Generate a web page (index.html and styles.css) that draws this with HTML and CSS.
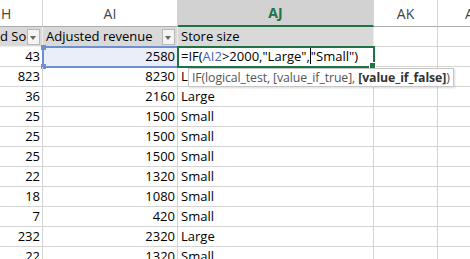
FILE: index.html
```html
<!DOCTYPE html>
<html lang="en">
<head>
    <meta charset="UTF-8">
    <title>Store size</title>
    <link rel="stylesheet" href="styles.css">
</head>
<body>
    <div class="sheet">
        <div class="col-head">H</div>
        <div class="col-head">AI</div>
        <div class="col-head active">AJ</div>
        <div class="col-head">AK</div>
        <div class="col-head">A</div>

        <div class="cell th">d So<span class="filter"></span></div>
        <div class="cell th">Adjusted revenue<span class="filter"></span></div>
        <div class="cell th">Store size</div>
        <div class="cell"></div>
        <div class="cell"></div>

        <div class="cell num">43</div>
        <div class="cell num ref">2580</div>
        <div class="cell editing">=IF(<span class="arg">AI2</span>&gt;2000,"Large",<span class="caret"></span>"Small")</div>
        <div class="cell"></div>
        <div class="cell"></div>

        <div class="cell num">823</div>
        <div class="cell num">8230</div>
        <div class="cell">Large
            <div class="tip">IF(logical_test, [value_if_true], <b>[value_if_false]</b>)</div>
        </div>
        <div class="cell"></div>
        <div class="cell"></div>
    </div>
    <script>
        const rows = [
            [36, 2160, 'Large'], [25, 1500, 'Small'], [25, 1500, 'Small'],
            [25, 1500, 'Small'], [22, 1320, 'Small'], [18, 1080, 'Small'],
            [7, 420, 'Small'], [232, 2320, 'Large'], [22, 1320, 'Small']
        ];
        const sheet = document.querySelector('.sheet');
        rows.forEach(r => {
            sheet.insertAdjacentHTML('beforeend',
                `<div class="cell num">${r[0]}</div>` +
                `<div class="cell num">${r[1]}</div>` +
                `<div class="cell">${r[2]}</div>` +
                `<div class="cell"></div><div class="cell"></div>`);
        });
    </script>
</body>
</html>
```

FILE: styles.css
```css
body {
    margin: 0;
    background: #ffffff;
    font-family: "Open Sans", sans-serif;
    font-size: 13px;
    color: #000;
    overflow: hidden;
}

.sheet {
    display: grid;
    grid-template-columns: 43px 135px 196px 64px 1fr;
    grid-template-rows: 27px;
    grid-auto-rows: 20px;
    width: 470px;
}

.col-head {
    background: #ffffff;
    color: #444;
    border-right: 1px solid #d4d4d4;
    border-bottom: 1px solid #ababab;
    display: flex;
    align-items: center;
    justify-content: center;
    font-size: 14px;
}

.col-head:first-child {
    justify-content: flex-start;
    padding-left: 1px;
}

.col-head:nth-child(5) {
    justify-content: flex-start;
    padding-left: 27px;
}

.col-head.active {
    background: #d2d2d2;
    color: #217346;
    font-weight: bold;
    border-bottom: 2px solid #217346;
}

.cell {
    position: relative;
    border-right: 1px solid #d4d4d4;
    border-bottom: 1px solid #d4d4d4;
    padding: 0 3px;
    line-height: 19px;
    white-space: nowrap;
}

.cell.num {
    text-align: right;
    padding-right: 2px;
}

.cell.th {
    background: #d9d9d9;
    border-right-color: #eeeeee;
    border-bottom-color: #eeeeee;
    overflow: hidden;
}

.sheet > .cell:nth-child(6) {
    text-indent: -3px;
}

.filter {
    position: absolute;
    right: 2px;
    top: 2px;
    width: 11px;
    height: 14px;
    background: #f4f4f4;
    border: 1px solid #b7b7b7;
}

.filter::after {
    content: "";
    position: absolute;
    left: 2px;
    top: 6px;
    border-left: 3.5px solid transparent;
    border-right: 3.5px solid transparent;
    border-top: 4px solid #666;
}

.cell.ref {
    background: #e9eef8;
    outline: 2px solid #6f8fcf;
    outline-offset: -1px;
}

.cell.ref::before,
.cell.ref::after {
    content: "";
    position: absolute;
    left: -2px;
    width: 5px;
    height: 5px;
    background: #6f8fcf;
}

.cell.ref::before {
    top: -2px;
}

.cell.ref::after {
    bottom: -3px;
}

.cell.editing {
    outline: 2px solid #217346;
    outline-offset: -1px;
    z-index: 1;
}

.cell.editing::after {
    content: "";
    position: absolute;
    right: -3px;
    bottom: -3px;
    width: 5px;
    height: 5px;
    background: #217346;
    border: 1px solid #fff;
}

.arg {
    color: #3f66b8;
}

.caret {
    display: inline-block;
    width: 1px;
    height: 16px;
    background: #000;
    vertical-align: -3px;
}

.tip {
    position: absolute;
    left: 10px;
    top: 1px;
    z-index: 2;
    background: #fff;
    color: #555;
    border: 1px solid #c6c6c6;
    box-shadow: 1px 1px 2px rgba(0, 0, 0, 0.15);
    padding: 0 3px;
    line-height: 17px;
    font-size: 12.3px;
    letter-spacing: -0.1px;
}

.tip b {
    color: #333;
}
```
